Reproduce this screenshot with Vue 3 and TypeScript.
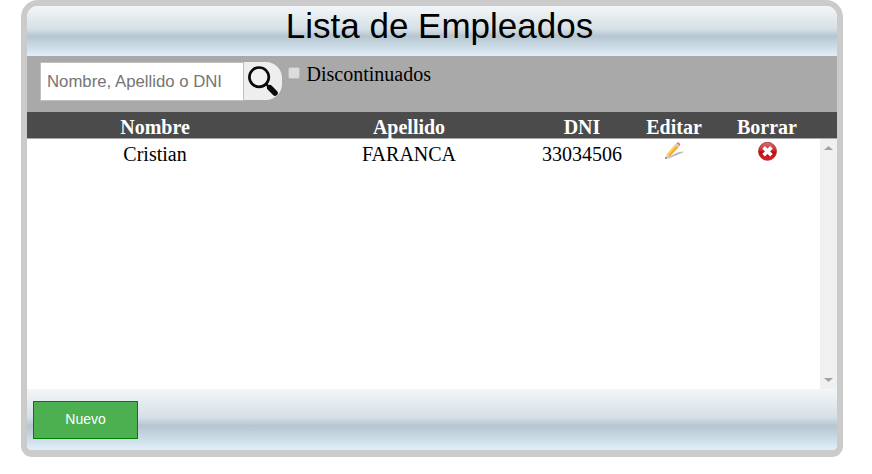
<script setup lang="ts">
import { ref, computed } from 'vue'

interface Empleado {
  nombre: string
  apellido: string
  dni: string
}

const busqueda = ref('')
const discontinuados = ref(false)
const empleados = ref<Empleado[]>([{ nombre: 'Cristian', apellido: 'FARANCA', dni: '33034506' }])

const visibles = computed(() => {
  const q = busqueda.value.trim().toLowerCase()
  return empleados.value.filter((e) => `${e.nombre} ${e.apellido} ${e.dni}`.toLowerCase().includes(q))
})

function borrar(dni: string): void {
  empleados.value = empleados.value.filter((e) => e.dni !== dni)
}
</script>

<template>
  <main class="panel">
    <header class="titulo">Lista de Empleados</header>

    <section class="filtros">
      <input v-model="busqueda" class="buscar" type="text" placeholder="Nombre, Apellido o DNI" />
      <button class="lupa" type="button">
        <svg width="32" height="32" viewBox="0 0 32 32">
          <circle cx="12.1" cy="12.2" r="9.700" fill="#f2f2f2" stroke="#0a0a0a" stroke-width="2.700" />
          <path d="M19 19l3 3" stroke="#0a0a0a" stroke-width="2.400" />
          <path d="M22.800 22.800l5.200 5.200" stroke="#0a0a0a" stroke-width="5.600" stroke-linecap="round" />
        </svg>
      </button>
      <label class="opcion">
        <input v-model="discontinuados" class="casilla" type="checkbox" />
        <span class="texto">Discontinuados</span>
      </label>
    </section>

    <div class="fila cabecera">
      <span>Nombre</span><span>Apellido</span><span>DNI</span><span>Editar</span><span>Borrar</span>
    </div>

    <section class="cuerpo">
      <div class="lista">
        <div v-for="e in visibles" :key="e.dni" class="fila">
          <span class="dato">{{ e.nombre }}</span>
          <span class="dato">{{ e.apellido }}</span>
          <span class="dato">{{ e.dni }}</span>
          <button class="accion" type="button">
            <svg width="20" height="20" viewBox="0 0 20 20">
              <path d="M1.500 17L11 11.500q4-1.800 8.600-1.900-.4 1.500-4.600 2.600L6 16z" fill="#bdbdbd" />
              <path d="M1 17l1.800-4.600 2.900 2.300z" fill="#e6cba6" />
              <path d="M1 17l.8-2.100 1.500 1.100z" fill="#555" />
              <path d="M2.800 12.400L11 2.800l3.400 2.700L5.700 14.700z" fill="#f0a92a" />
              <path d="M2.800 12.400L11 2.800l1.700 1.300L4.200 13.500z" fill="#ffd063" />
              <path d="M11 2.800l1.400-1.600 3.400 2.700-1.400 1.600z" fill="#cfd0d4" />
              <path d="M12.400 1.200q1.300-1.500 2.900-.3t.5 3z" fill="#e87878" />
            </svg>
          </button>
          <button class="accion" type="button" @click="borrar(e.dni)">
            <svg width="20" height="20" viewBox="0 0 20 20">
              <defs>
                <linearGradient id="rojo" x1="0" y1="0" x2="0" y2="1">
                  <stop offset="0" stop-color="#e07070" />
                  <stop offset=".45" stop-color="#cd2a2e" />
                  <stop offset=".55" stop-color="#c4080f" />
                  <stop offset="1" stop-color="#d8282c" />
                </linearGradient>
              </defs>
              <circle cx="10.500" cy="9.300" r="9" fill="url(#rojo)" stroke="#a82a2c" stroke-width=".8" />
              <path d="M6.600 5.400l7.800 7.800M14.400 5.400l-7.800 7.800" stroke="#fff" stroke-width="3.700" />
            </svg>
          </button>
        </div>
      </div>
      <div class="barra">
        <svg width="9" height="4" viewBox="0 0 9 4"><path d="M0 4h9L4.500 0z" fill="#a3a3a3" /></svg>
        <svg width="9" height="4" viewBox="0 0 9 4"><path d="M0 0h9L4.500 4z" fill="#a3a3a3" /></svg>
      </div>
    </section>

    <footer class="pie">
      <button class="nuevo" type="button">Nuevo</button>
    </footer>
  </main>
</template>

<style>
body {
  background: #fff;
  overflow: hidden;
}
</style>

<style scoped>
.panel {
  box-sizing: border-box;
  display: flex;
  flex-direction: column;
  width: 822px;
  height: 457px;
  margin-left: 21px;
  border: 6px solid #cbcbcb;
  border-bottom-width: 7px;
  border-radius: 17px 17px 11px 11px;
  overflow: hidden;
  font: 20px/23px "Liberation Serif", "Times New Roman", serif;
  color: #000;
}
.titulo,
.pie {
  background: linear-gradient(to bottom, #f2f6f8 0%, #d8e1e7 44%, #d3dce5 48%, #b5c6d0 60%, #e0effa 100%);
}
.titulo {
  height: 50px;
  font: 35px/40px "Liberation Sans", Arial, sans-serif;
  text-align: center;
  padding-left: 15px;
  box-sizing: border-box;
}
.filtros {
  display: flex;
  align-items: flex-start;
  box-sizing: border-box;
  height: 56px;
  padding: 6px 13px;
  background: #a9a9a9;
}
.buscar {
  box-sizing: border-box;
  width: 204px;
  height: 39px;
  margin: 0;
  padding: 0 6px;
  border: 1px solid #bfbfbf;
  border-radius: 0;
  outline: 0;
  background: #fff;
  font: 16.75px "Liberation Sans", Arial, sans-serif;
}
.buscar::placeholder {
  color: #757575;
}
.lupa {
  display: flex;
  width: 38px;
  height: 38px;
  padding: 3px 0 0 3px;
  border: 0;
  border-radius: 0 16px 16px 0;
  background: #eee;
}
.opcion {
  display: flex;
  align-items: flex-start;
  margin-left: 6px;
}
.casilla {
  appearance: none;
  width: 12px;
  height: 12px;
  box-sizing: border-box;
  margin: 5px 6.500px 0 0;
  border: 1px solid #bcbcbc;
  border-radius: 2px;
  background: #dcdcdc;
}
.texto {
  padding-top: 1px;
}
.fila {
  display: grid;
  grid-template-columns: 256px 252px 94px 90px 96px;
  justify-items: center;
  align-items: start;
}
.cabecera {
  box-sizing: border-box;
  height: 27px;
  padding-top: 4px;
  border-bottom: 1px solid #a9a9a9;
  background: #4b4b4b;
  color: #fff;
  font-weight: bold;
}
.cuerpo {
  display: flex;
  height: 250px;
  background: #fff;
}
.lista {
  flex: 1;
  padding-top: 3px;
}
.dato {
  padding-top: 1px;
}
.accion {
  display: flex;
  padding: 0;
  border: 0;
  background: none;
}
.barra {
  display: flex;
  flex-direction: column;
  justify-content: space-between;
  align-items: center;
  box-sizing: border-box;
  width: 17px;
  padding: 7px 0;
  background: #f0f0f0;
}
.pie {
  flex: 1;
  padding: 12px 6px 0;
}
.nuevo {
  box-sizing: border-box;
  display: block;
  width: 105px;
  height: 38px;
  padding: 0 0 2px;
  border: 1px solid #008000;
  background: #4caf50;
  color: #fff;
  font: 14px "Liberation Sans", Arial, sans-serif;
}
</style>
